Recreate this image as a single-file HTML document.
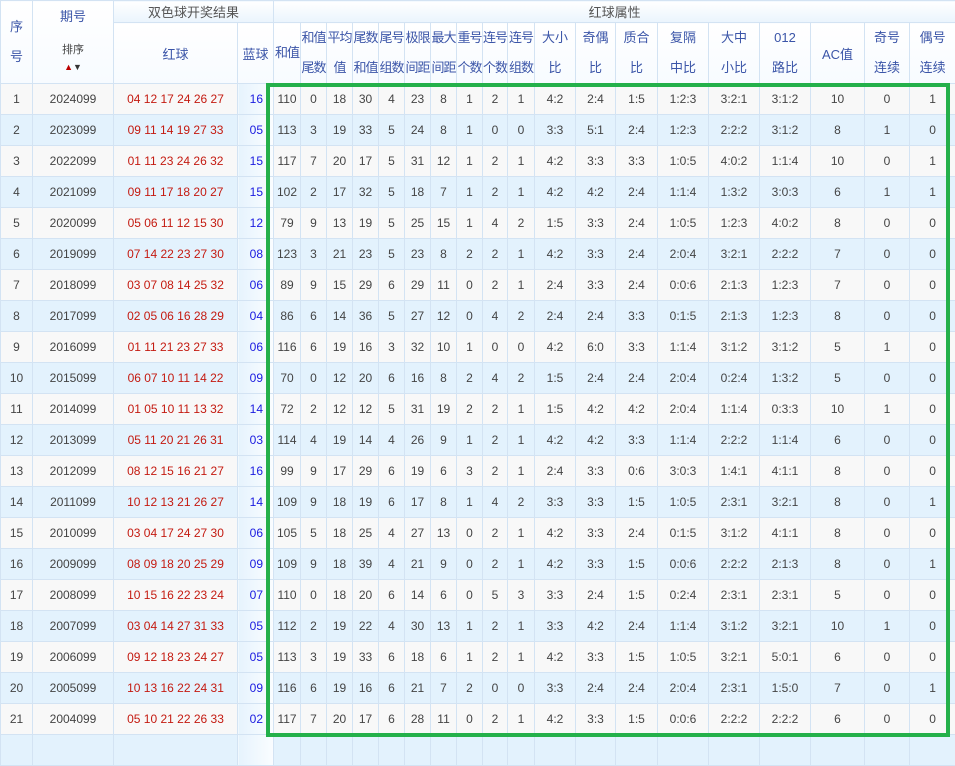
<!DOCTYPE html>
<html><head><meta charset="utf-8"><style>
body{margin:0;width:955px;height:739px;overflow:hidden;background:#fff;font-family:"Liberation Sans","Noto Sans CJK SC",sans-serif;}
table{border-collapse:collapse;table-layout:fixed;position:absolute;left:0;top:0;width:956px;}
td,th{border:1px solid #d3e3f3;text-align:center;padding:0;font-size:12px;color:#444;font-weight:normal;white-space:nowrap;}
td{overflow:hidden;}
th{color:#3b55a8;font-size:13px;background:linear-gradient(#fff,#f7fbff);overflow:visible;}
th.t{color:#555;height:21px;background:linear-gradient(#fff,#eaf4fd);}
th.h{line-height:30px;letter-spacing:-1px;}
th.h2{line-height:30px;}
thead tr.r2{height:60px;}
thead tr.r2 th{height:60px;}
tbody tr{height:31px;}
tbody tr:nth-child(odd){background:#f8f8f8;}
tbody tr:nth-child(even){background:#e3f2fd;}
td.r{color:#c41a10;}
td.b{color:#1a1ae0;background:linear-gradient(90deg,#e6f3fd,#fafdff);text-align:right;padding-right:10px;}
.box{position:absolute;left:266px;top:83px;width:676px;height:646px;border:4px solid #24b04a;}
.arr{font-size:9px;}
</style></head><body>
<table>
<colgroup><col style="width:32px"><col style="width:81px"><col style="width:124px"><col style="width:36px"><col style="width:27px"><col style="width:26px"><col style="width:26px"><col style="width:26px"><col style="width:26px"><col style="width:26px"><col style="width:26px"><col style="width:26px"><col style="width:25px"><col style="width:27px"><col style="width:41px"><col style="width:40px"><col style="width:42px"><col style="width:51px"><col style="width:51px"><col style="width:51px"><col style="width:54px"><col style="width:45px"><col style="width:46px"></colgroup>
<thead>
<tr><th rowspan="2" class="h2">序<br>号</th><th rowspan="2" style="line-height:16px">期号<br><br><span style="font-size:11px;color:#444">排序</span><br><span class="arr"><span style="color:#b00">▲</span><span style="color:#333">▼</span></span></th><th colspan="2" class="t">双色球开奖结果</th><th colspan="19" class="t">红球属性</th></tr>
<tr class="r2"><th>红球</th><th>蓝球</th><th class="h">和值</th><th class="h">和值<br>尾数</th><th class="h">平均<br>值</th><th class="h">尾数<br>和值</th><th class="h">尾号<br>组数</th><th class="h">极限<br>间距</th><th class="h">最大<br>间距</th><th class="h">重号<br>个数</th><th class="h">连号<br>个数</th><th class="h">连号<br>组数</th><th class="h2">大小<br>比</th><th class="h2">奇偶<br>比</th><th class="h2">质合<br>比</th><th class="h2">复隔<br>中比</th><th class="h2">大中<br>小比</th><th class="h2">012<br>路比</th><th>AC值</th><th class="h2">奇号<br>连续</th><th class="h2">偶号<br>连续</th></tr>
</thead>
<tbody>
<tr><td>1</td><td>2024099</td><td class="r">04 12 17 24 26 27</td><td class="b">16</td><td>110</td><td>0</td><td>18</td><td>30</td><td>4</td><td>23</td><td>8</td><td>1</td><td>2</td><td>1</td><td>4:2</td><td>2:4</td><td>1:5</td><td>1:2:3</td><td>3:2:1</td><td>3:1:2</td><td>10</td><td>0</td><td>1</td></tr>
<tr><td>2</td><td>2023099</td><td class="r">09 11 14 19 27 33</td><td class="b">05</td><td>113</td><td>3</td><td>19</td><td>33</td><td>5</td><td>24</td><td>8</td><td>1</td><td>0</td><td>0</td><td>3:3</td><td>5:1</td><td>2:4</td><td>1:2:3</td><td>2:2:2</td><td>3:1:2</td><td>8</td><td>1</td><td>0</td></tr>
<tr><td>3</td><td>2022099</td><td class="r">01 11 23 24 26 32</td><td class="b">15</td><td>117</td><td>7</td><td>20</td><td>17</td><td>5</td><td>31</td><td>12</td><td>1</td><td>2</td><td>1</td><td>4:2</td><td>3:3</td><td>3:3</td><td>1:0:5</td><td>4:0:2</td><td>1:1:4</td><td>10</td><td>0</td><td>1</td></tr>
<tr><td>4</td><td>2021099</td><td class="r">09 11 17 18 20 27</td><td class="b">15</td><td>102</td><td>2</td><td>17</td><td>32</td><td>5</td><td>18</td><td>7</td><td>1</td><td>2</td><td>1</td><td>4:2</td><td>4:2</td><td>2:4</td><td>1:1:4</td><td>1:3:2</td><td>3:0:3</td><td>6</td><td>1</td><td>1</td></tr>
<tr><td>5</td><td>2020099</td><td class="r">05 06 11 12 15 30</td><td class="b">12</td><td>79</td><td>9</td><td>13</td><td>19</td><td>5</td><td>25</td><td>15</td><td>1</td><td>4</td><td>2</td><td>1:5</td><td>3:3</td><td>2:4</td><td>1:0:5</td><td>1:2:3</td><td>4:0:2</td><td>8</td><td>0</td><td>0</td></tr>
<tr><td>6</td><td>2019099</td><td class="r">07 14 22 23 27 30</td><td class="b">08</td><td>123</td><td>3</td><td>21</td><td>23</td><td>5</td><td>23</td><td>8</td><td>2</td><td>2</td><td>1</td><td>4:2</td><td>3:3</td><td>2:4</td><td>2:0:4</td><td>3:2:1</td><td>2:2:2</td><td>7</td><td>0</td><td>0</td></tr>
<tr><td>7</td><td>2018099</td><td class="r">03 07 08 14 25 32</td><td class="b">06</td><td>89</td><td>9</td><td>15</td><td>29</td><td>6</td><td>29</td><td>11</td><td>0</td><td>2</td><td>1</td><td>2:4</td><td>3:3</td><td>2:4</td><td>0:0:6</td><td>2:1:3</td><td>1:2:3</td><td>7</td><td>0</td><td>0</td></tr>
<tr><td>8</td><td>2017099</td><td class="r">02 05 06 16 28 29</td><td class="b">04</td><td>86</td><td>6</td><td>14</td><td>36</td><td>5</td><td>27</td><td>12</td><td>0</td><td>4</td><td>2</td><td>2:4</td><td>2:4</td><td>3:3</td><td>0:1:5</td><td>2:1:3</td><td>1:2:3</td><td>8</td><td>0</td><td>0</td></tr>
<tr><td>9</td><td>2016099</td><td class="r">01 11 21 23 27 33</td><td class="b">06</td><td>116</td><td>6</td><td>19</td><td>16</td><td>3</td><td>32</td><td>10</td><td>1</td><td>0</td><td>0</td><td>4:2</td><td>6:0</td><td>3:3</td><td>1:1:4</td><td>3:1:2</td><td>3:1:2</td><td>5</td><td>1</td><td>0</td></tr>
<tr><td>10</td><td>2015099</td><td class="r">06 07 10 11 14 22</td><td class="b">09</td><td>70</td><td>0</td><td>12</td><td>20</td><td>6</td><td>16</td><td>8</td><td>2</td><td>4</td><td>2</td><td>1:5</td><td>2:4</td><td>2:4</td><td>2:0:4</td><td>0:2:4</td><td>1:3:2</td><td>5</td><td>0</td><td>0</td></tr>
<tr><td>11</td><td>2014099</td><td class="r">01 05 10 11 13 32</td><td class="b">14</td><td>72</td><td>2</td><td>12</td><td>12</td><td>5</td><td>31</td><td>19</td><td>2</td><td>2</td><td>1</td><td>1:5</td><td>4:2</td><td>4:2</td><td>2:0:4</td><td>1:1:4</td><td>0:3:3</td><td>10</td><td>1</td><td>0</td></tr>
<tr><td>12</td><td>2013099</td><td class="r">05 11 20 21 26 31</td><td class="b">03</td><td>114</td><td>4</td><td>19</td><td>14</td><td>4</td><td>26</td><td>9</td><td>1</td><td>2</td><td>1</td><td>4:2</td><td>4:2</td><td>3:3</td><td>1:1:4</td><td>2:2:2</td><td>1:1:4</td><td>6</td><td>0</td><td>0</td></tr>
<tr><td>13</td><td>2012099</td><td class="r">08 12 15 16 21 27</td><td class="b">16</td><td>99</td><td>9</td><td>17</td><td>29</td><td>6</td><td>19</td><td>6</td><td>3</td><td>2</td><td>1</td><td>2:4</td><td>3:3</td><td>0:6</td><td>3:0:3</td><td>1:4:1</td><td>4:1:1</td><td>8</td><td>0</td><td>0</td></tr>
<tr><td>14</td><td>2011099</td><td class="r">10 12 13 21 26 27</td><td class="b">14</td><td>109</td><td>9</td><td>18</td><td>19</td><td>6</td><td>17</td><td>8</td><td>1</td><td>4</td><td>2</td><td>3:3</td><td>3:3</td><td>1:5</td><td>1:0:5</td><td>2:3:1</td><td>3:2:1</td><td>8</td><td>0</td><td>1</td></tr>
<tr><td>15</td><td>2010099</td><td class="r">03 04 17 24 27 30</td><td class="b">06</td><td>105</td><td>5</td><td>18</td><td>25</td><td>4</td><td>27</td><td>13</td><td>0</td><td>2</td><td>1</td><td>4:2</td><td>3:3</td><td>2:4</td><td>0:1:5</td><td>3:1:2</td><td>4:1:1</td><td>8</td><td>0</td><td>0</td></tr>
<tr><td>16</td><td>2009099</td><td class="r">08 09 18 20 25 29</td><td class="b">09</td><td>109</td><td>9</td><td>18</td><td>39</td><td>4</td><td>21</td><td>9</td><td>0</td><td>2</td><td>1</td><td>4:2</td><td>3:3</td><td>1:5</td><td>0:0:6</td><td>2:2:2</td><td>2:1:3</td><td>8</td><td>0</td><td>1</td></tr>
<tr><td>17</td><td>2008099</td><td class="r">10 15 16 22 23 24</td><td class="b">07</td><td>110</td><td>0</td><td>18</td><td>20</td><td>6</td><td>14</td><td>6</td><td>0</td><td>5</td><td>3</td><td>3:3</td><td>2:4</td><td>1:5</td><td>0:2:4</td><td>2:3:1</td><td>2:3:1</td><td>5</td><td>0</td><td>0</td></tr>
<tr><td>18</td><td>2007099</td><td class="r">03 04 14 27 31 33</td><td class="b">05</td><td>112</td><td>2</td><td>19</td><td>22</td><td>4</td><td>30</td><td>13</td><td>1</td><td>2</td><td>1</td><td>3:3</td><td>4:2</td><td>2:4</td><td>1:1:4</td><td>3:1:2</td><td>3:2:1</td><td>10</td><td>1</td><td>0</td></tr>
<tr><td>19</td><td>2006099</td><td class="r">09 12 18 23 24 27</td><td class="b">05</td><td>113</td><td>3</td><td>19</td><td>33</td><td>6</td><td>18</td><td>6</td><td>1</td><td>2</td><td>1</td><td>4:2</td><td>3:3</td><td>1:5</td><td>1:0:5</td><td>3:2:1</td><td>5:0:1</td><td>6</td><td>0</td><td>0</td></tr>
<tr><td>20</td><td>2005099</td><td class="r">10 13 16 22 24 31</td><td class="b">09</td><td>116</td><td>6</td><td>19</td><td>16</td><td>6</td><td>21</td><td>7</td><td>2</td><td>0</td><td>0</td><td>3:3</td><td>2:4</td><td>2:4</td><td>2:0:4</td><td>2:3:1</td><td>1:5:0</td><td>7</td><td>0</td><td>1</td></tr>
<tr><td>21</td><td>2004099</td><td class="r">05 10 21 22 26 33</td><td class="b">02</td><td>117</td><td>7</td><td>20</td><td>17</td><td>6</td><td>28</td><td>11</td><td>0</td><td>2</td><td>1</td><td>4:2</td><td>3:3</td><td>1:5</td><td>0:0:6</td><td>2:2:2</td><td>2:2:2</td><td>6</td><td>0</td><td>0</td></tr>
<tr><td></td><td></td><td></td><td class="b"></td><td></td><td></td><td></td><td></td><td></td><td></td><td></td><td></td><td></td><td></td><td></td><td></td><td></td><td></td><td></td><td></td><td></td><td></td><td></td></tr>
</tbody>
</table>
<div class="box"></div>
</body></html>
